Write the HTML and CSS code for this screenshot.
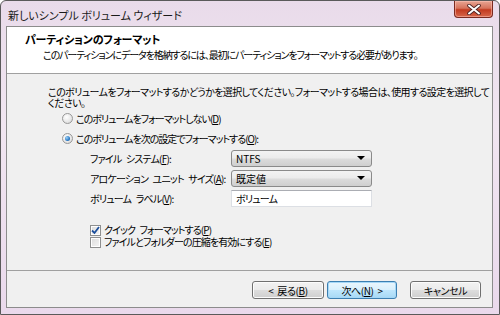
FILE: index.html
```html
<!DOCTYPE html>
<html lang="ja">
<head>
    <meta charset="UTF-8">
    <title>新しいシンプル ボリューム ウィザード</title>
    <link rel="stylesheet" href="styles.css">
</head>
<body>
    <div class="window">
        <div class="titlebar">
            <div class="title">新しいシンプル ボリューム ウィザード</div>
            <div class="close-btn">
                <svg width="14" height="11" viewBox="0 0 14 11">
                    <path d="M2 1.5 L12 9.5 M12 1.5 L2 9.5" stroke="#4a2020" stroke-width="3.6" stroke-linecap="round"/>
                    <path d="M2 1.5 L12 9.5 M12 1.5 L2 9.5" stroke="#fff" stroke-width="2" stroke-linecap="round"/>
                </svg>
            </div>
        </div>

        <div class="client">
            <div class="header">
                <div class="header-title">パーティションのフォーマット</div>
                <div class="header-sub">このパーティションにデータを格納するには、最初にパーティションをフォーマットする必要があります。</div>
            </div>

            <div class="content">
                <p class="intro">このボリュームをフォーマットするかどうかを選択してください。フォーマットする場合は、使用する設定を選択して<br>ください。</p>

                <div class="options">
                    <div class="radio-row">
                        <span class="radio"></span>
                        <span>このボリュームをフォーマットしない(<u>D</u>)</span>
                    </div>
                    <div class="radio-row">
                        <span class="radio checked"></span>
                        <span>このボリュームを次の設定でフォーマットする(<u>O</u>):</span>
                    </div>
                </div>

                <div class="settings">
                    <div class="field">
                        <span class="label">ファイル システム(<u>F</u>):</span>
                        <div class="combo">NTFS<span class="arrow"></span></div>
                    </div>
                    <div class="field">
                        <span class="label">アロケーション ユニット サイズ(<u>A</u>):</span>
                        <div class="combo">既定値<span class="arrow"></span></div>
                    </div>
                    <div class="field">
                        <span class="label">ボリューム ラベル(<u>V</u>):</span>
                        <div class="textbox">ボリューム</div>
                    </div>

                    <div class="checks">
                        <div class="check-row">
                            <span class="checkbox checked">
                                <svg width="9" height="9" viewBox="0 0 9 9">
                                    <path d="M1 4.5 L3.5 7 L8 1" fill="none" stroke="#1c4f9c" stroke-width="1.8"/>
                                </svg>
                            </span>
                            <span>クイック フォーマットする(<u>P</u>)</span>
                        </div>
                        <div class="check-row">
                            <span class="checkbox"></span>
                            <span>ファイルとフォルダーの圧縮を有効にする(<u>E</u>)</span>
                        </div>
                    </div>
                </div>
            </div>

            <div class="footer">
                <button class="btn">&lt; 戻る(<u>B</u>)</button>
                <button class="btn default">次へ(<u>N</u>) &gt;</button>
                <button class="btn cancel">キャンセル</button>
            </div>
        </div>
    </div>
</body>
</html>
```

FILE: styles.css
```css
* {
    margin: 0;
    padding: 0;
    box-sizing: border-box;
}

body {
    width: 500px;
    height: 315px;
    overflow: hidden;
    background: #fff;
    font-family: "Noto Sans CJK JP", sans-serif;
    font-size: 10px;
    font-feature-settings: "palt";
    color: #000;
}

u {
    text-decoration: underline;
    text-underline-offset: 1px;
}

.window {
    width: 500px;
    height: 315px;
    display: flex;
    flex-direction: column;
    border: 1px solid #5a5a5a;
    border-radius: 6px 6px 0 0;
    background: linear-gradient(180deg, #e9dbea 0%, #f1e6f1 40%, #ead9ec 100%);
    padding: 0 6px 6px 5px;
}

.titlebar {
    height: 25px;
    display: flex;
    align-items: flex-start;
    justify-content: space-between;
}

.title {
    font-size: 11px;
    padding: 6px 0 0 2px;
    color: #1a1a1a;
}

.close-btn {
    width: 39px;
    height: 17px;
    border: 1px solid #7a2a20;
    border-top: none;
    border-radius: 0 0 4px 4px;
    background: linear-gradient(180deg, #e8a593 0%, #d6735c 45%, #c23a1f 55%, #d7674b 100%);
    box-shadow: inset 0 0 0 1px rgba(255, 200, 190, 0.5);
    display: flex;
    align-items: center;
    justify-content: center;
}

.client {
    flex: 1;
    display: flex;
    flex-direction: column;
    border: 1px solid #8c8c8c;
    background: #f0f0f0;
}

.header {
    height: 47px;
    background: #fff;
    border-bottom: 1px solid #a0a0a0;
    padding: 5px 0 0 18px;
}

.header-title {
    font-weight: bold;
    font-size: 11px;
    line-height: 15px;
    letter-spacing: -0.2px;
}

.header-sub {
    padding-left: 18px;
    line-height: 15px;
    letter-spacing: -1.1px;
}

.content {
    flex: 1;
    padding: 12px 0 0 41px;
}

.intro {
    line-height: 11px;
    letter-spacing: -0.6px;
}

.radio-row {
    display: flex;
    align-items: center;
    gap: 3px;
    margin-left: 14px;
    height: 20px;
    letter-spacing: -1px;
}

.radio {
    width: 11px;
    height: 11px;
    border-radius: 50%;
    border: 1px solid #979797;
    background: radial-gradient(circle at 40% 35%, #fff 0%, #e6e6e6 60%, #cfcfcf 100%);
    display: flex;
    align-items: center;
    justify-content: center;
}

.radio.checked::after {
    content: "";
    width: 5px;
    height: 5px;
    border-radius: 50%;
    background: radial-gradient(circle at 35% 35%, #9fd2f5 0%, #2a7ac6 60%, #154e8f 100%);
}

.settings {
    padding-left: 42px;
}

.field {
    display: flex;
    align-items: center;
    height: 20px;
    letter-spacing: -0.8px;
    word-spacing: 3px;
}

.label {
    width: 141px;
}

.combo {
    width: 141px;
    height: 17px;
    border: 1px solid #8a8a8a;
    border-radius: 3px;
    background: linear-gradient(180deg, #f3f3f3 0%, #ebebeb 48%, #dcdcdc 52%, #cfcfcf 100%);
    display: flex;
    align-items: center;
    justify-content: space-between;
    padding: 0 6px 0 4px;
    letter-spacing: 0;
}

.arrow {
    width: 0;
    height: 0;
    border-left: 4px solid transparent;
    border-right: 4px solid transparent;
    border-top: 4px solid #000;
}

.textbox {
    width: 141px;
    height: 17px;
    background: #fff;
    border: 1px solid #dcdfe4;
    border-top-color: #abadb3;
    padding: 0 4px;
    line-height: 15px;
}

.checks {
    margin-top: 16px;
    display: flex;
    flex-direction: column;
}

.check-row {
    display: flex;
    align-items: center;
    gap: 3px;
    height: 12px;
    line-height: 12px;
    letter-spacing: -0.9px;
    word-spacing: 3px;
}

.checkbox {
    width: 11px;
    height: 11px;
    border: 1px solid #8e8f8f;
    background: linear-gradient(135deg, #dcdcdc 0%, #f6f6f6 100%);
    box-shadow: inset 0 0 0 1px #fff;
    display: flex;
    align-items: center;
    justify-content: center;
}

.footer {
    height: 37px;
    border-top: 1px solid #a0a0a0;
    display: flex;
    align-items: flex-start;
    padding: 10px 0 0 245px;
}

.btn {
    width: 72px;
    height: 18px;
    font-family: "Noto Sans CJK JP", sans-serif;
    font-size: 10px;
    font-feature-settings: "palt";
    letter-spacing: -0.4px;
    word-spacing: 2px;
    border: 1px solid #707070;
    border-radius: 3px;
    background: linear-gradient(180deg, #f2f2f2 0%, #ebebeb 48%, #dddddd 52%, #cfcfcf 100%);
    box-shadow: inset 0 0 0 1px #fcfcfc;
    color: #000;
}

.btn.default {
    margin-left: 3px;
    width: 70px;
    border-color: #3c7fb1;
    background: linear-gradient(180deg, #eaf6fd 0%, #d9f0fc 48%, #bee6fd 52%, #a7d9f5 100%);
    box-shadow: inset 0 0 0 1px #a6d8f7;
}

.btn.cancel {
    margin-left: 13px;
    width: 71px;
}
```
